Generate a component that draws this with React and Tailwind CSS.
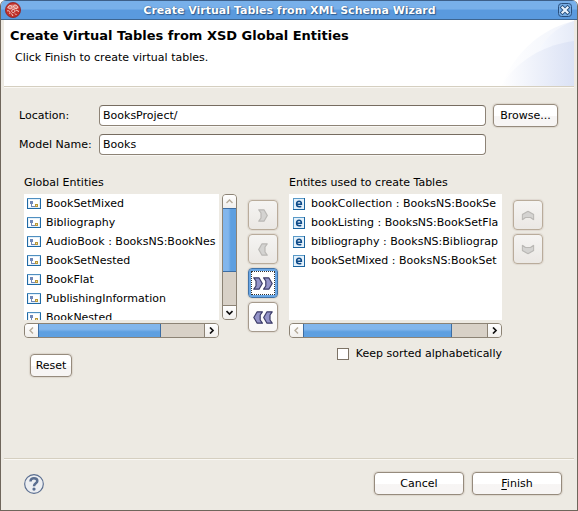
import React from "react";

const leftItems = [
  "BookSetMixed",
  "Bibliography",
  "AudioBook : BooksNS:BookNes",
  "BookSetNested",
  "BookFlat",
  "PublishingInformation",
  "BookNested",
];
const rightItems = [
  "bookCollection : BooksNS:BookSe",
  "bookListing : BooksNS:BookSetFla",
  "bibliography : BooksNS:Bibliograp",
  "bookSetMixed : BooksNS:BookSet",
];

function TypeIcon() {
  return (
    <svg width="14" height="11" viewBox="0 0 14 11" shapeRendering="crispEdges" className="shrink-0" aria-hidden="true">
      <rect width="14" height="11" fill="#1f6aa5" />
      <rect x="0" y="0" width="14" height="1" fill="#4f8fc0" />
      <rect x="1" y="1" width="12" height="9" fill="#e3f0fa" />
      <rect x="2" y="2" width="10" height="7" fill="#fff" />
      <rect x="3" y="3" width="3" height="3" fill="#7088b8" />
      <rect x="4" y="6" width="1" height="2" fill="#7088b8" />
      <rect x="4" y="8" width="4" height="1" fill="#7088b8" />
      <rect x="8" y="6" width="3" height="3" fill="#b8963a" />
      <rect x="9" y="7" width="1" height="1" fill="#f3e3a0" />
    </svg>
  );
}

function ElementIcon() {
  return (
    <svg width="12" height="12" viewBox="0 0 12 12" className="shrink-0" aria-hidden="true">
      <rect x="0.5" y="0.5" width="11" height="11" fill="#e4f1fb" stroke="#5a9ac8" />
      <path d="M0 11.5H12M11.5 0V12" stroke="#1a639e" />
      <path d="M3.6 6.2H8.4C8.4 4 7.6 3.2 6.1 3.2C4.5 3.2 3.6 4.3 3.6 6C3.6 7.9 4.6 8.8 6.3 8.8C7.1 8.8 7.8 8.6 8.3 8.3" fill="none" stroke="#0d4a88" strokeWidth="1.5" />
    </svg>
  );
}

function Chevron({ disabled, double, rotate = "" }) {
  const fill = disabled ? "#d4d3d1" : "#9393c8";
  const stroke = disabled ? "#bab8b5" : "#3c3c68";
  const w = double ? 20 : 10;
  return (
    <svg width={w} height="13" viewBox={`0 0 ${w} 13`} className={`shrink-0 ${rotate}`} aria-hidden="true">
      <g fill={fill} stroke={stroke} strokeWidth="1.2" strokeLinejoin="round">
        <path d="M0.8 0.8H6L9.3 6.5L6 12.2H0.8L3 9V4Z" />
        {double && <path d="M10.6 0.8H15.8L19.2 6.5L15.8 12.2H10.6L12.8 9V4Z" />}
      </g>
    </svg>
  );
}

function MoveButton({ label, disabled, focused, double, rotate }) {
  const look = focused
    ? "border-[#4274a8] bg-white ring-2 ring-inset ring-[#6aa7e6]"
    : disabled
      ? "border-[#b9ac9b] bg-linear-to-b from-[#f5f4f2] to-[#ebe8e4]"
      : "border-[#a59a8c] bg-linear-to-b from-white to-[#f8f7f6]";
  return (
    <button
      type="button"
      aria-label={label}
      disabled={disabled}
      className={`flex size-[30px] items-center justify-center rounded-[4px] border shadow-[0_0_1px_1px_#dfd9d1] ${look}`}
    >
      {focused ? (
        <span className="flex size-[24px] items-center justify-center border border-dotted border-[#333]">
          <Chevron double={double} rotate={rotate} />
        </span>
      ) : (
        <Chevron disabled={disabled} double={double} rotate={rotate} />
      )}
    </button>
  );
}

function Arrow({ dim, rotate = "" }) {
  return (
    <svg width="7" height="7" viewBox="0 0 7 7" className={rotate} aria-hidden="true">
      <path d="M2 0.5L5 3.5L2 6.5" fill="none" stroke={dim ? "#b5ab9a" : "#111"} strokeWidth={dim ? 1.4 : 1.7} />
    </svg>
  );
}

function ArrowButton({ label, dim, rotate, className }) {
  return (
    <button
      type="button"
      aria-label={label}
      className={`flex shrink-0 items-center justify-center bg-linear-to-b from-white to-[#f1efec] ${className}`}
    >
      <Arrow dim={dim} rotate={rotate} />
    </button>
  );
}

function HScroll({ thumb }) {
  return (
    <div className="mt-[3px] flex h-[15px] overflow-hidden rounded-[4px] border border-[#8c8375] bg-[#d8d1c7]">
      <ArrowButton label="Scroll left" dim rotate="rotate-180" className="w-[13px]" />
      <div className="flex-1">
        <div
          className="h-full border-x border-[#3c6da3] bg-linear-to-b from-[#82b6ec] from-40% to-[#5d9fe0] to-60%"
          style={{ width: thumb }}
        />
      </div>
      <ArrowButton label="Scroll right" className="w-[14px] border-l border-[#8c8375]" />
    </div>
  );
}

function VScroll() {
  return (
    <div className="ml-[3px] flex h-[126px] w-[15px] shrink-0 flex-col overflow-hidden rounded-[4px] border border-[#8c8375] bg-[#d8d1c7]">
      <ArrowButton label="Scroll up" dim rotate="-rotate-90" className="h-[13px]" />
      <div className="flex-1">
        <div className="h-[64px] border-y border-[#3c6da3] bg-linear-to-r from-[#82b6ec] from-40% to-[#5d9fe0] to-60%" />
      </div>
      <ArrowButton label="Scroll down" rotate="rotate-90" className="h-[14px] border-t border-[#8c8375]" />
    </div>
  );
}

const field =
  "h-[21px] min-w-0 flex-1 rounded-[4px] border border-[#8d8376] border-t-[#766c60] bg-white px-[3px] shadow-[0_1px_0_#f8f6f2] outline-none";
const push =
  "h-[23px] rounded-[4px] border border-[#968b7d] bg-linear-to-b from-white from-50% to-[#f7f5f4] to-55% text-center shadow-[0_0_1px_1px_#dcd6cd]";

export default function App() {
  return (
    <div className="flex min-h-screen flex-col overflow-hidden rounded-t-[6px] border border-t-0 border-[#6f665b] bg-[#edeae3] font-['DejaVu_Sans','Noto_Sans',sans-serif] text-[11px] leading-[15px] text-black">
      <header className="flex h-[20px] shrink-0 items-center border-t border-b border-t-[#3d5f88] border-b-[#3d6590] bg-linear-to-b from-[#78b0ea] from-45% to-[#5a9ade] to-50% pr-[5px] pl-[4px]">
        <svg width="16" height="16" viewBox="0 0 16 16" aria-hidden="true">
          <circle cx="8" cy="8" r="7.6" fill="#c0302a" stroke="#8c1a18" strokeWidth="0.7" />
          <path d="M2 6a6.3 5 0 0 1 12 0c-3 2-9 2-12 0Z" fill="#dc7a72" />
          <g fill="none" stroke="#f5d5cf" strokeWidth="1">
            <path d="M3 5.5C3.5 3 7 3 7 5S4.5 7.5 3 5.5" />
            <path d="M8.5 4C10 2 13 3.5 12.5 5.5S8.5 6.5 8.5 4" />
            <path d="M7 8C9 6.5 11 8.5 9.5 10S6 10 7 8" />
            <path d="M2 9C4 8 6 10 4.5 12M11 8L14 9.5M6.5 11.5L8 14M10 11.5L11.5 13" />
          </g>
        </svg>
        <h1 className="flex-1 text-center text-[11px] font-bold text-white [text-shadow:0_0_1px_#244c7c,1px_1px_1px_#315f94]">
          Create Virtual Tables from XML Schema Wizard
        </h1>
        <button type="button" aria-label="Close">
          <svg width="14" height="14" viewBox="0 0 14 14" aria-hidden="true">
            <rect x="0.5" y="0.5" width="13" height="13" rx="3" fill="#76ace4" stroke="#294f7d" />
            <path d="M4.5 4.5L9.5 9.5M9.5 4.5L4.5 9.5" stroke="#28517f" strokeWidth="4" strokeLinecap="square" />
            <path d="M4.5 4.5L9.5 9.5M9.5 4.5L4.5 9.5" stroke="#e9f3fd" strokeWidth="2.2" strokeLinecap="square" />
          </svg>
        </button>
      </header>

      <section className="mx-[3px] flex h-[67px] shrink-0 justify-between border-b border-b-[#d5cfc0] bg-white shadow-[0_1px_0_#faf8f4]">
        <div className="pt-[7px] pl-[6px]">
          <h2 className="text-[13px] leading-[17px] font-bold whitespace-nowrap">Create Virtual Tables from XSD Global Entities</h2>
          <p className="mt-[6px] pl-[5px]">Click Finish to create virtual tables.</p>
        </div>
        <svg width="75" height="66" viewBox="0 0 75 66" className="shrink-0" aria-hidden="true">
          <defs>
            <linearGradient id="outerWave" x1="0" x2="1">
              <stop offset="0" stopColor="#fff" />
              <stop offset="1" stopColor="#f0f3fb" />
            </linearGradient>
            <linearGradient id="tipWave" x1="0" x2="1">
              <stop offset="0" stopColor="#f8faff" />
              <stop offset="1" stopColor="#e6ebf8" />
            </linearGradient>
            <linearGradient id="innerWave" x1="0" x2="1">
              <stop offset="0" stopColor="#fff" />
              <stop offset="1" stopColor="#dbe2f5" />
            </linearGradient>
          </defs>
          <path d="M2 66C16 32 42 9 75 1V66Z" fill="url(#outerWave)" />
          <path d="M37 36C44 20 57 7 75 1V36Z" fill="url(#tipWave)" />
          <path d="M2 66C17 42 43 25 75 21V66Z" fill="url(#innerWave)" />
        </svg>
      </section>

      <main className="flex flex-1 flex-col">
        <div className="flex items-center pt-[17px] pr-[19px] pl-[18px]">
          <label htmlFor="location" className="w-[80px]">Location:</label>
          <input id="location" className={field} defaultValue="BooksProject/" />
          <button type="button" className={`ml-[7px] w-[65px] whitespace-nowrap ${push}`}>Browse...</button>
        </div>
        <div className="mt-[7px] flex items-center pr-[91px] pl-[18px]">
          <label htmlFor="model" className="w-[80px] whitespace-nowrap">Model Name:</label>
          <input id="model" className={field} defaultValue="Books" />
        </div>

        <div className="mt-[20px] flex pr-[34px] pl-[23px]">
          <section className="min-w-0 flex-1">
            <h3>Global Entities</h3>
            <div className="mt-[4px] flex">
              <div className="min-w-0 flex-1">
                <ul className="h-[126px] overflow-hidden bg-white pl-[3px]">
                  {leftItems.map((t) => (
                    <li key={t} className="flex h-[19px] items-center gap-[5px] whitespace-nowrap">
                      <TypeIcon />
                      {t}
                    </li>
                  ))}
                </ul>
                <HScroll thumb="74%" />
              </div>
              <VScroll />
            </div>
            <button type="button" className={`mt-[16px] ml-[6px] w-[42px] ${push}`}>Reset</button>
          </section>

          <div className="flex flex-col gap-[4px] px-[11px] pt-[25px]">
            <MoveButton label="Add" disabled />
            <MoveButton label="Remove" disabled rotate="rotate-180" />
            <MoveButton label="Add all" focused double />
            <MoveButton label="Remove all" double rotate="rotate-180" />
          </div>

          <section className="min-w-0 flex-1">
            <h3 className="whitespace-nowrap">Entites used to create Tables</h3>
            <ul className="mt-[4px] h-[126px] overflow-hidden bg-white pl-[4px]">
              {rightItems.map((t) => (
                <li key={t} className="flex h-[19px] items-center gap-[6px] whitespace-nowrap">
                  <ElementIcon />
                  {t}
                </li>
              ))}
            </ul>
            <HScroll thumb="81%" />
            <label className="mt-[8px] flex items-center justify-end gap-[7px] whitespace-nowrap">
              <input type="checkbox" className="size-[12px] appearance-none border border-[#7d7366] bg-white" />
              Keep sorted alphabetically
            </label>
          </section>

          <div className="flex flex-col gap-[4px] pt-[25px] pl-[11px]">
            <MoveButton label="Move up" disabled rotate="-rotate-90" />
            <MoveButton label="Move down" disabled rotate="rotate-90" />
          </div>
        </div>
      </main>

      <footer className="mx-[3px] flex h-[52px] shrink-0 items-center border-t border-t-[#d5cfc0] pr-[12px] pb-[2px] pl-[20px] shadow-[inset_0_1px_0_#faf8f4]">
        <button type="button" aria-label="Help">
          <svg width="20" height="20" viewBox="0 0 21 21" aria-hidden="true">
            <circle cx="10.5" cy="10.5" r="9.8" fill="#eceef1" stroke="#5a6e90" strokeWidth="1.2" />
            <path d="M6.8 7.8C6.8 5.4 8.4 4.4 10.4 4.4C12.6 4.4 14 5.6 14 7.4C14 9.8 10.5 9.8 10.5 12.8" fill="none" stroke="#5a6e90" strokeWidth="2.6" />
            <circle cx="10.5" cy="15.8" r="1.7" fill="#5a6e90" />
          </svg>
        </button>
        <div className="ml-auto flex gap-[8px]">
          <button type="button" className={`w-[90px] ${push}`}>Cancel</button>
          <button type="button" className={`w-[90px] ${push}`}>
            <span className="underline underline-offset-2">F</span>inish
          </button>
        </div>
      </footer>
    </div>
  );
}
